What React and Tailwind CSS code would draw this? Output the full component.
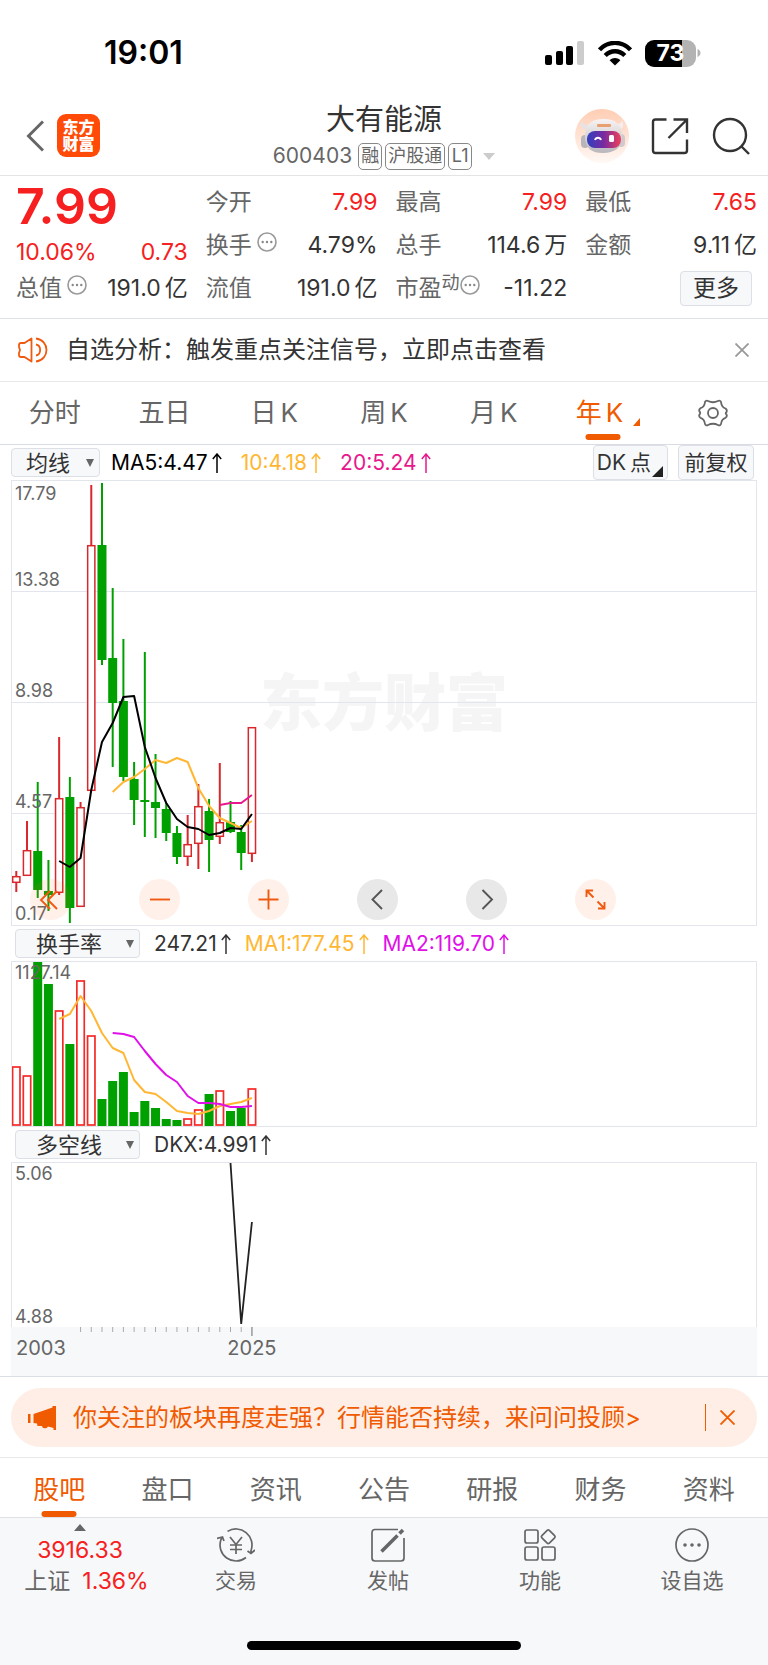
import React from "react";
import clsx from "clsx";

// [high, bodyTop, bodyBottom, low, up]
const candles = [
  [390, 395, 402, 411, 1],
  [340, 369, 395, 395, 1],
  [301, 370, 409, 417, 0],
  [379, 410, 414, 430, 0],
  [256, 317, 412, 414, 1],
  [296, 316, 427, 442, 0],
  [321, 326, 426, 426, 1],
  [4, 64, 310, 310, 1],
  [2, 64, 179, 184, 0],
  [107, 177, 222, 286, 0],
  [158, 220, 296, 300, 0],
  [281, 298, 319, 344, 0],
  [171, 319, 321, 356, 0],
  [273, 321, 327, 357, 0],
  [322, 328, 352, 360, 0],
  [345, 352, 376, 383, 0],
  [334, 363, 376, 385, 1],
  [303, 325, 363, 388, 1],
  [318, 330, 359, 391, 0],
  [282, 341, 356, 363, 1],
  [320, 341, 351, 352, 0],
  [344, 351, 372, 389, 0],
  [246, 246, 373, 381, 1],
];
const ma5 = [380, 386, 377, 309, 261, 242, 216, 215, 266, 297, 322, 338, 346, 348, 354, 352, 347, 348, 333];
const ma10 = [311, 301, 296, 288, 279, 282, 277, 281, 307, 325, 337, 342, 347, 340];
const ma20 = [324, 322, 322, 314];

const turnover = [104, 113, 0, 22, 48, 82, 18, 73, 137, 119, 110, 150, 139, 146, 157, 158, 156, 147, 132, 128, 149, 146, 126];
const turnoverUp = [0, 1, 4, 6, 7, 16, 17, 19, 22];
const turnMa1 = [57, 52, 34, 49, 71, 86, 91, 118, 130, 132, 140, 149, 151, 152, 149, 144, 142, 140, 136];
const turnMa2 = [71, 72, 75, 89, 102, 113, 120, 134, 141, 141, 142, 145, 145, 144];

const xAt = (i) => 4.3 + i * 10.71;
const toPoints = (values, start) =>
  values.map((y, i) => `${xAt(start + i)},${y}`).join(" ");

function Line({ values, start, color }) {
  return (
    <polyline
      points={toPoints(values, start)}
      fill="none"
      stroke={color}
      strokeWidth="2"
      strokeLinejoin="round"
    />
  );
}

function MoreDots({ className }) {
  return (
    <svg viewBox="0 0 20 20" className={clsx("w-5 h-5 mb-2 shrink-0", className)} fill="none">
      <circle cx="10" cy="10" r="9" stroke="#999" strokeWidth="1.6" />
      <circle cx="5.7" cy="10" r="1.2" fill="#888" />
      <circle cx="10" cy="10" r="1.2" fill="#888" />
      <circle cx="14.3" cy="10" r="1.2" fill="#888" />
    </svg>
  );
}

function StatusBar() {
  return (
    <div className="flex h-[98px] items-center justify-between pl-[104px] pr-[67px] pt-2">
      <span className="text-[32px] font-semibold leading-none text-black">19:01</span>
      <div className="flex items-center">
        <svg viewBox="0 0 39 25" className="w-[39px] h-[25px]">
          <rect x="0" y="14" width="7" height="10" rx="2" />
          <rect x="11" y="10" width="7" height="14" rx="2" />
          <rect x="21" y="5" width="7" height="19" rx="2" />
          <rect x="32" y="0" width="7" height="24" rx="2" fill="#ccc" />
        </svg>
        <svg viewBox="0 0 34 25" className="ml-[14px] w-[34px] h-[25px]" fill="none" stroke="#000">
          <path d="M1.5 8.8C10 -.4 24 -.4 32.5 8.8" strokeWidth="4.4" />
          <path d="M7.2 14.5C12.8 8.9 21.2 8.9 26.8 14.5" strokeWidth="4.4" />
          <path d="M17 24.5L11.6 19.3C14.8 16.3 19.2 16.3 22.4 19.3Z" fill="#000" stroke="none" />
        </svg>
        <div className="ml-[13px] flex h-[27px] w-[51px] items-center justify-center rounded-[9px] bg-[linear-gradient(to_right,#000_73%,#b3b3b3_73%)] text-[23px] font-bold leading-none text-white">
          73
        </div>
        <svg viewBox="0 0 5 8" className="w-[5px] h-2">
          <path d="M1.5 0C5.5 1.5 5.5 6.5 1.5 8Z" fill="#b3b3b3" />
        </svg>
      </div>
    </div>
  );
}

function Robot() {
  return (
    <svg viewBox="0 0 54 54" className="w-[54px] h-[54px]">
      <defs>
        <linearGradient id="halo" x1="0" y1="0" x2="0" y2="1">
          <stop offset="0" stopColor="#ffcdb3" />
          <stop offset="1" stopColor="#fff8f5" />
        </linearGradient>
        <linearGradient id="visor" x1="0" y1="0" x2="1" y2="0">
          <stop offset="0" stopColor="#2f3fc0" />
          <stop offset=".5" stopColor="#7a2aa0" />
          <stop offset="1" stopColor="#f0405a" />
        </linearGradient>
        <linearGradient id="shell" x1="0" y1="0" x2="0" y2="1">
          <stop offset="0" stopColor="#f8f4f4" />
          <stop offset="1" stopColor="#b9b6bc" />
        </linearGradient>
      </defs>
      <circle cx="27" cy="27" r="27" fill="url(#halo)" />
      <path d="M6 12C4 17 7 21 13 20L16 14C11 17 8 16 6 12Z" fill="#e9e2e3" />
      <path d="M47 11C50 17 47 21 42 20L39 14C44 16 46 15 47 11Z" fill="#f4eeee" />
      <rect x="6" y="26" width="8" height="13" rx="4" fill="#b9b4ba" />
      <rect x="42" y="25" width="8" height="13" rx="4" fill="#d0cace" />
      <path d="M10 27C10 14 18 10 29 10C40 10 47 15 47 28C47 39 39 44 28 44C17 44 10 40 10 27Z" fill="url(#shell)" />
      <rect x="22" y="15" width="14" height="3" rx="1" fill="#e8a070" />
      <rect x="12" y="22" width="34" height="17" rx="8" fill="url(#visor)" />
      <path d="M20 31C21 28 25 28 26 31" stroke="#fff" strokeWidth="1.8" fill="none" />
      <rect x="34" y="26" width="5" height="7" rx="1.5" fill="#fff" />
    </svg>
  );
}

function Header() {
  return (
    <header className="grid h-[78px] grid-cols-[1fr_auto_1fr] items-center border-b border-[#e4e4e6] px-[18px]">
      <div className="flex items-center gap-[13px] pb-[2px] pl-2">
        <button aria-label="返回">
          <svg viewBox="0 0 18 32" className="w-[18px] h-8" fill="none" stroke="#666" strokeWidth="3">
            <path d="M17 1.5L2.5 16L17 30.5" />
          </svg>
        </button>
        <div className="flex h-[43px] w-[43px] flex-col items-center justify-center rounded-[9px] bg-[#ff4a08] text-[16px] font-black leading-[17px] text-white">
          <span>东方</span>
          <span>财富</span>
        </div>
      </div>
      <div className="flex flex-col items-center">
        <h1 className="pt-px text-[29px] leading-[38px] text-[#333]">大有能源</h1>
        <div className="flex h-[34px] items-center gap-[3px] text-[#666]">
          <span className="mr-[3px] text-[21px]">600403</span>
          <Tag>融</Tag>
          <Tag>沪股通</Tag>
          <Tag>L1</Tag>
          <svg viewBox="0 0 12 7" className="ml-2 w-3 h-[7px]">
            <path d="M0 0H12L6 7Z" fill="#ccc" />
          </svg>
        </div>
      </div>
      <div className="flex items-center justify-end pb-[2px]">
        <button aria-label="助手">
          <Robot />
        </button>
        <button aria-label="分享" className="ml-[22px]">
          <svg viewBox="0 0 38 38" className="w-[38px] h-[38px]" fill="none" stroke="#333" strokeWidth="2.4">
            <path d="M15.5 2.5H4.5Q2 2.5 2 5V33.5Q2 36 4.5 36H33.5Q36 36 36 33.5V22.5" />
            <path d="M22.5 2.5H36V16M36 2.5L17.5 21" />
          </svg>
        </button>
        <button aria-label="搜索" className="ml-[23px]">
          <svg viewBox="0 0 38 38" className="w-[38px] h-[38px]" fill="none" stroke="#333" strokeWidth="2.4">
            <circle cx="18" cy="18" r="16" />
            <path d="M29 29L37 37" />
          </svg>
        </button>
      </div>
    </header>
  );
}

function Tag({ children }) {
  return (
    <span className="flex h-[27px] min-w-6 items-center justify-center rounded-[5px] border border-[#888] px-[2px] text-[18px] leading-none">
      {children}
    </span>
  );
}

function Stat({ label, extra, value, unit, red }) {
  return (
    <div className="flex h-[43px] items-center justify-between text-[23px]">
      <div className="flex items-center">
        <span className="text-[#666]">{label}</span>
        {extra}
      </div>
      <span className={red ? "text-[#f62020]" : "text-[#333]"}>
        {value}
        {unit && <span className="ml-1">{unit}</span>}
      </span>
    </div>
  );
}

function Quote() {
  return (
    <section className="grid grid-cols-4 gap-x-[18px] border-b border-[#e0e2ea] pb-2 pl-4 pr-[11px] pt-[5px] leading-none">
      <div>
        <div className="flex h-[50px] items-center text-[50px] font-semibold text-[#f62020]">7.99</div>
        <div className="flex h-[42px] items-center justify-between text-[23px] text-[#f62020]">
          <span>10.06%</span>
          <span>0.73</span>
        </div>
        <div className="-mt-[6px]">
          <Stat label="总值" extra={<MoreDots className="ml-[5px]" />} value="191.0" unit="亿" />
        </div>
      </div>
      <div>
        <Stat label="今开" value="7.99" red />
        <Stat label="换手" extra={<MoreDots className="ml-[5px]" />} value="4.79%" />
        <Stat label="流值" value="191.0" unit="亿" />
      </div>
      <div>
        <Stat label="最高" value="7.99" red />
        <Stat label="总手" value="114.6" unit="万" />
        <Stat
          label="市盈"
          extra={
            <span className="flex items-center">
              <span className="mb-3 text-[18px] text-[#666]">动</span>
              <MoreDots />
            </span>
          }
          value="-11.22"
        />
      </div>
      <div>
        <Stat label="最低" value="7.65" red />
        <Stat label="金额" value="9.11" unit="亿" />
        <div className="flex h-[43px] items-center justify-end pr-[5px]">
          <button className="h-[35px] w-[72px] rounded border border-[#dcdfe6] bg-[#f7f8fa] text-[23px] text-[#333]">
            更多
          </button>
        </div>
      </div>
    </section>
  );
}

function Notice() {
  return (
    <section className="flex h-[63px] items-center border-b border-[#e8e8ea] pl-[18px] pr-[19px]">
      <svg viewBox="0 0 30 26" className="w-[30px] h-[26px]" fill="none" stroke="#f05a10" strokeWidth="1.8">
        <path d="M13.5 1.5V24.5L6.5 20H3Q1 20 1 18V16L2 13L1 10V8Q1 6 3 6H6.5Z" strokeLinejoin="round" />
        <path d="M18 7.5C23.5 8.5 23.5 17.5 18 18.5M18 1.5C32 3.5 32 22.5 18 24.5" />
      </svg>
      <p className="ml-[18px] flex-1 text-[24px] leading-none text-[#333]">
        自选分析：触发重点关注信号，立即点击查看
      </p>
      <button aria-label="关闭">
        <svg viewBox="0 0 14 14" className="w-[14px] h-[14px]" stroke="#999" strokeWidth="1.8">
          <path d="M.5 .5L13.5 13.5M13.5 .5L.5 13.5" />
        </svg>
      </button>
    </section>
  );
}

const periods = [["分时"], ["五日"], ["日", "K"], ["周", "K"], ["月", "K"], ["年", "K"]];

function PeriodTabs() {
  return (
    <nav className="grid h-[63px] grid-cols-7 border-b border-[#d9dce5] text-[26px] leading-none text-[#666]">
      {periods.map(([name, k]) => {
        const active = name === "年";
        return (
          <button
            key={name}
            className={clsx("relative flex items-center justify-center", active && "pr-2 text-[#f05a00]")}
          >
            {name}
            {k && <span className="ml-1">{k}</span>}
            {active && (
              <>
                <svg viewBox="0 0 7 8" className="absolute bottom-[18px] right-[18px] w-[7px] h-2">
                  <path d="M7 0V8H0Z" fill="#f05a00" />
                </svg>
                <span className="absolute bottom-1 left-1/2 h-[6px] w-[35px] -translate-x-1/2 rounded-full bg-[#f05a00]"></span>
              </>
            )}
          </button>
        );
      })}
      <button aria-label="设置" className="flex items-center justify-center">
        <svg viewBox="0 0 30 28" className="w-[30px] h-7" fill="none" stroke="#666" strokeWidth="1.8">
          <path
            strokeLinejoin="round"
            d="M10 2Q15 4.5 20 2Q22 1 23 3Q23.5 8 27.5 9.5Q29.5 11 28.5 13Q27 14 28.5 15.5Q29.5 17.5 27.5 18.8Q23.5 20 23 25Q22 27.2 20 26Q15 23.5 10 26Q8 27.2 7 25Q6.5 20 2.5 18.8Q.5 17.5 1.5 15.5Q3 14 1.5 12.5Q.5 10.5 2.5 9.2Q6.5 8 7 3Q8 1 10 2Z"
          />
          <circle cx="15" cy="14" r="5" />
        </svg>
      </button>
    </nav>
  );
}

function Caret() {
  return (
    <svg viewBox="0 0 8 8" className="w-2 h-2">
      <path d="M0 0H8L4 8Z" fill="#666" />
    </svg>
  );
}

function Arrow() {
  return (
    <svg viewBox="0 0 10 20" className="ml-1 w-[10px] h-5 shrink-0" fill="none" stroke="currentColor" strokeWidth="1.5">
      <path d="M5 20V1M.8 6L5 1L9.2 6" />
    </svg>
  );
}

function Metric({ className, children }) {
  return (
    <span className={clsx("flex items-center text-[21px]", className)}>
      {children}
      <Arrow />
    </span>
  );
}

function IndicatorRow({ name, children }) {
  return (
    <div className="flex h-[35px] items-center pl-[15px] leading-none">
      <button className="flex h-[29px] w-[125px] items-center justify-between rounded border border-[#dcdfe6] bg-[#f7f8fa] pl-5 pr-[5px] text-[22px] text-[#333]">
        {name}
        <Caret />
      </button>
      {children}
    </div>
  );
}

function PriceChart() {
  return (
    <div className="relative mx-[11px] h-[446px] border border-[#e3e5ec]">
      <svg className="block h-full w-full">
        <text x="50%" y="245" textAnchor="middle" fontSize="62" fontWeight="900" fill="#f5f5f5">
          东方财富
        </text>
        {[111, 222, 333].map((y) => (
          <line key={y} x1="0" x2="100%" y1={y - 0.5} y2={y - 0.5} stroke="#e3e5ee" />
        ))}
        {candles.map(([high, top, bottom, low, up], i) => {
          const x = xAt(i);
          const color = up ? "#d8282c" : "#00a000";
          return (
            <g key={i} stroke={color} strokeWidth="2">
              <line x1={x} x2={x} y1={high} y2={top} />
              <line x1={x} x2={x} y1={bottom} y2={low} />
              {up ? (
                <rect x={x - 3.6} y={top + 0.7} width="7.2" height={bottom - top - 1.4} fill="#fff" strokeWidth="1.5" />
              ) : (
                <rect x={x - 4.5} y={top} width="9" height={bottom - top} fill={color} stroke="none" />
              )}
            </g>
          );
        })}
        <Line values={ma10} start={9} color="#ffb733" />
        <Line values={ma20} start={19} color="#e8188c" />
        <Line values={ma5} start={4} color="#000" />
        <g fontSize="18" fill="#666">
          <text x="3" y="19">17.79</text>
          <text x="3" y="105">13.38</text>
          <text x="3" y="216">8.98</text>
          <text x="3" y="327">4.57</text>
          <text x="3" y="439">0.17</text>
        </g>
      </svg>
      <div className="absolute bottom-[5px] left-[18px] flex gap-[68px]">
        <RoundButton label="最早" d="M20 12L11 21L20 30M27 12L18 21L27 30" />
        <RoundButton label="缩小" d="M11 20.5H31" />
        <RoundButton label="放大" d="M10.5 20.5H30.5M20.5 10.5V30.5" />
        <RoundButton label="向左" gray d="M25 11L15.5 20.5L25 30" />
        <RoundButton label="向右" gray d="M16.5 11L26 20.5L16.5 30" />
        <RoundButton label="全屏" d="M11.5 18V11.5H18M11.5 11.5L18.5 18.5M23 29.5H29.5V23M29.5 29.5L22.5 22.5" />
      </div>
    </div>
  );
}

function RoundButton({ label, d, gray }) {
  return (
    <button
      aria-label={label}
      className={clsx(
        "h-[41px] w-[41px] rounded-full",
        gray ? "bg-[#e6e6e6]/90 text-[#555]" : "bg-[#ff6a20]/10 text-[#f05a10]"
      )}
    >
      <svg viewBox="0 0 41 41" className="h-full w-full" fill="none" stroke="currentColor" strokeWidth="1.9">
        <path d={d} />
      </svg>
    </button>
  );
}

function TurnoverChart() {
  return (
    <div className="mx-[11px] h-[166px] border border-[#e3e5ec]">
      <svg className="block h-full w-full">
        {turnover.map((y, i) => {
          const x = xAt(i);
          return turnoverUp.includes(i) ? (
            <rect key={i} x={x - 3.7} y={y + 1} width="7.4" height={162 - y} fill="#fff" stroke="#f62828" strokeWidth="1.7" />
          ) : (
            <rect key={i} x={x - 4.5} y={y} width="9" height={164 - y} fill="#00a000" />
          );
        })}
        <Line values={turnMa1} start={4} color="#ffb733" />
        <Line values={turnMa2} start={9} color="#e010e8" />
        <text x="3" y="17" fontSize="18" fill="#666">1127.14</text>
      </svg>
    </div>
  );
}

function DkxChart() {
  const ticks = Array.from({ length: 16 }, (_, i) => i + 6);
  return (
    <div className="mx-[11px]">
      <div className="h-[165px] border-x border-t border-[#e3e5ec]">
        <svg className="block h-full w-full">
          <polyline points={`${xAt(20)},0 ${xAt(21)},161 ${xAt(22)},59`} fill="none" stroke="#222" strokeWidth="1.8" />
          <g fontSize="18" fill="#666">
            <text x="3" y="17">5.06</text>
            <text x="3" y="160">4.88</text>
          </g>
        </svg>
      </div>
      <svg className="block h-[49px] w-full bg-[#f7f8fa]">
        {ticks.map((i) => (
          <line key={i} x1={xAt(i) + 1} x2={xAt(i) + 1} y1="0" y2="5" stroke="#aaa" />
        ))}
        <line x1={xAt(22) + 1} x2={xAt(22) + 1} y1="0" y2="9" stroke="#999" strokeWidth="1.5" />
        <text x="5" y="28" fontSize="20" fill="#666">2003</text>
        <text x={xAt(22) + 1} y="28" fontSize="20" fill="#666" textAnchor="middle">2025</text>
      </svg>
    </div>
  );
}

function Charts() {
  return (
    <section className="border-b border-[#dcdee6]">
      <div className="flex h-[35px] items-center pl-[11px] pr-[14px] leading-none">
        <button className="flex h-[29px] w-[89px] items-center justify-between rounded border border-[#dcdfe6] bg-[#f7f8fa] pl-[14px] pr-[5px] text-[22px] text-[#333]">
          均线
          <Caret />
        </button>
        <Metric className="ml-[11px] text-black">MA5:4.47</Metric>
        <Metric className="ml-[19px] text-[#ffb733]">10:4.18</Metric>
        <Metric className="ml-[19px] text-[#e8188c]">20:5.24</Metric>
        <button className="relative ml-auto h-[35px] w-[75px] rounded border border-[#dcdfe6] bg-[#f7f8fa] pr-4 text-right text-[21px] text-[#333]">
          DK<span className="ml-1">点</span>
          <svg viewBox="0 0 11 11" className="absolute bottom-[2px] right-1 w-[11px] h-[11px]">
            <path d="M11 0V11H0Z" fill="#222" />
          </svg>
        </button>
        <button className="ml-[10px] h-[35px] w-[76px] rounded border border-[#dcdfe6] bg-[#f7f8fa] text-[21px] text-[#333]">
          前复权
        </button>
      </div>
      <PriceChart />
      <IndicatorRow name="换手率">
        <Metric className="ml-[14px] text-[#333]">247.21</Metric>
        <Metric className="ml-[14px] text-[#ffb733]">MA1:177.45</Metric>
        <Metric className="ml-[14px] text-[#e010e8]">MA2:119.70</Metric>
      </IndicatorRow>
      <TurnoverChart />
      <IndicatorRow name="多空线">
        <Metric className="ml-[14px] text-[#333]">DKX:4.991</Metric>
      </IndicatorRow>
      <DkxChart />
    </section>
  );
}

function Banner() {
  return (
    <section className="border-b border-[#e8e8ea] px-[11px] pb-[10px] pt-[11px]">
      <div className="flex h-[59px] items-center rounded-full bg-[#feeee6] pl-[17px] pr-[22px] text-[#f05a00]">
        <svg viewBox="0 0 28 24" className="w-7 h-6" fill="currentColor">
          <path d="M0 8H2.5V17H0ZM5.5 8L24.5 1.5V0H28V24H25.5V22L20 20.5C18.5 23 15.5 22.5 14.5 21.5L14 20L9.5 20L9 17.5L5.5 17Z" />
        </svg>
        <p className="ml-[17px] flex-1 whitespace-nowrap text-[24px] leading-none">
          你关注的板块再度走强？行情能否持续，来问问投顾&gt;
        </p>
        <span className="h-[27px] w-px bg-[#f05a00]"></span>
        <button aria-label="关闭" className="ml-[14px]">
          <svg viewBox="0 0 15 15" className="w-[15px] h-[15px]" stroke="currentColor" strokeWidth="1.8">
            <path d="M.5 .5L14.5 14.5M14.5 .5L.5 14.5" />
          </svg>
        </button>
      </div>
    </section>
  );
}

function InfoTabs() {
  return (
    <nav className="grid h-[60px] grid-cols-7 border-b border-[#dfe1e6] px-[5px] text-[26px] leading-none text-[#666]">
      {["股吧", "盘口", "资讯", "公告", "研报", "财务", "资料"].map((name, i) => (
        <button key={name} className={clsx("relative pt-1", i === 0 && "text-[#f05a00]")}>
          {name}
          {i === 0 && (
            <span className="absolute bottom-0 left-1/2 h-[6px] w-[35px] -translate-x-1/2 rounded-full bg-[#f05a00]"></span>
          )}
        </button>
      ))}
    </nav>
  );
}

function NavItem({ label, children }) {
  return (
    <button className="flex flex-1 flex-col items-center pt-[9px] text-[21px] leading-none text-[#666]">
      <svg viewBox="0 0 38 36" className="w-[38px] h-9" fill="none" stroke="#666" strokeWidth="1.7">
        {children}
      </svg>
      <span className="mt-[7px]">{label}</span>
    </button>
  );
}

function BottomNav() {
  return (
    <footer className="bg-[#f7f8fa]">
      <div className="flex h-[123px]">
        <a href="#index" className="flex w-40 flex-col items-center pt-[6px] text-[23px] leading-[31px] text-[#f62020]">
          <svg viewBox="0 0 12 7" className="w-3 h-[7px]">
            <path d="M0 7H12L6 0Z" fill="#666" />
          </svg>
          <span className="mt-1">3916.33</span>
          <span className="flex gap-3 pl-[13px]">
            <span className="text-[#666]">上证</span>
            <span>1.36%</span>
          </span>
        </a>
        <NavItem label="交易">
          <path d="M10.5 4.400A16 16 0 0 1 34 23.500V26.500M29 30.500A16 16 0 0 1 4 12.500L5.500 10M0 11.500L5.500 10L7 14M38 23L34 26.500L30.500 24" />
          <path d="M13 10L19 17.500L25 10M19 17.500V27M13 18H25M13 22.500H25" />
        </NavItem>
        <NavItem label="发帖">
          <path d="M29 2.5H6Q3 2.5 3 5.5V31Q3 34 6 34H32Q35 34 35 31V11" />
          <path d="M12.5 24.5L28.5 8.5" strokeWidth="3.5" />
          <path d="M30.5 6.5L34 3" strokeWidth="3.5" />
        </NavItem>
        <NavItem label="功能">
          <rect x="4" y="3" width="13" height="13" rx="2" />
          <rect x="4" y="20" width="13" height="13" rx="2" />
          <rect x="21" y="20" width="13" height="13" rx="2" />
          <rect x="22" y="4.5" width="10.5" height="10.5" rx="1.5" transform="rotate(45 27.25 9.75)" />
        </NavItem>
        <NavItem label="设自选">
          <circle cx="19" cy="18" r="16" />
          <g fill="#666" stroke="none">
            <circle cx="12" cy="18" r="1.8" />
            <circle cx="19" cy="18" r="1.8" />
            <circle cx="26" cy="18" r="1.8" />
          </g>
        </NavItem>
      </div>
      <div className="flex justify-center pb-[15px]">
        <span className="h-[9px] w-[274px] rounded-full bg-black"></span>
      </div>
    </footer>
  );
}

function App() {
  return (
    <div className="w-full bg-white font-['Inter','Noto_Sans_CJK_SC',sans-serif]">
      <StatusBar />
      <Header />
      <Quote />
      <Notice />
      <PeriodTabs />
      <Charts />
      <Banner />
      <InfoTabs />
      <BottomNav />
    </div>
  );
}

export default App;
